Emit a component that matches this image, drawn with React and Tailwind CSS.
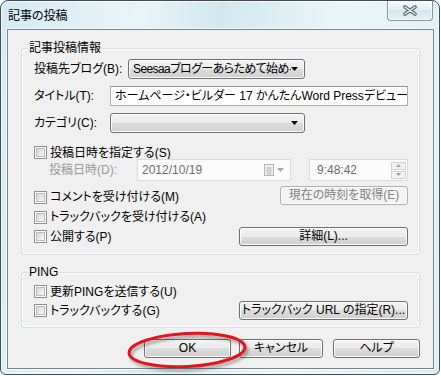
import React from 'react';

const font = "font-['Liberation_Sans','Noto_Sans_CJK_JP',sans-serif] [font-feature-settings:'palt']";

const Box = () => (
  <span className="flex w-[13px] h-[13px] shrink-0 border border-[#8e8f8f] bg-white p-[1px]">
    <span className="flex-1 border border-[#b9bdc2] bg-[linear-gradient(135deg,#d4d7db,#f8f8f8)]" />
  </span>
);

const Check = ({ children }) => (
  <label className="flex items-center">
    <Box />
    <span className="ml-[3px] leading-[16px] whitespace-nowrap">{children}</span>
  </label>
);

const Btn = ({ className = '', disabled, children }) => (
  <button
    type="button"
    className={
      'h-[19px] shrink-0 rounded-[3px] border leading-[15px] whitespace-nowrap shadow-[inset_0_0_0_1px_#fcfcfc] ' +
      (disabled
        ? 'border-[#adb2b5] bg-[#f4f4f4] text-[#838383] '
        : 'border-[#707070] bg-[linear-gradient(#f2f2f2,#ebebeb_50%,#dddddd_50%,#cfcfcf)] text-black ') +
      className
    }
  >
    {children}
  </button>
);

const Arrow = ({ color = '#000' }) => (
  <svg width="7" height="4" viewBox="0 0 7 4" className="shrink-0">
    <path d="M0 0H7L3.5 4Z" fill={color} />
  </svg>
);

const Select = ({ className = '', children }) => (
  <div
    className={
      'flex h-[20px] items-center rounded-[3px] border border-[#707070] bg-[linear-gradient(#f2f2f2,#ebebeb_50%,#dddddd_50%,#cfcfcf)] pl-[4px] pr-[6px] shadow-[inset_0_0_0_1px_#fcfcfc] ' +
      className
    }
  >
    <span className="flex-1 overflow-hidden whitespace-nowrap leading-[16px] tracking-[-0.6px]">{children}</span>
    <Arrow />
  </div>
);

export default function App() {
  return (
    <div className={'relative w-[441px] h-[376px] bg-white text-[12px] text-black ' + font}>
      <div className="w-[440px] h-[375px] rounded-t-[8px] rounded-b-[6px] border border-[#3f4c57] bg-[linear-gradient(100deg,#d4eaf1_0%,#e7f5f9_28%,#d2e8ef_44%,#e9f6f9_68%,#dbeef4_100%)] shadow-[inset_0_0_0_1px_rgba(255,255,255,0.7)]">
        <div className="flex h-[28px] items-start justify-between">
          <span className="ml-[7px] mt-[7px] leading-[16px] text-[12px]">記事の投稿</span>
          <div className="mr-[6px] flex h-[20px] w-[46px] items-center justify-center rounded-b-[4px] border border-t-0 border-[#8894a0] bg-[linear-gradient(#f4fafc,#dfeef3_50%,#d4e7ee_50%,#e3f1f5)] shadow-[inset_0_0_0_1px_rgba(255,255,255,0.6)]">
            <svg width="16" height="11" viewBox="0 0 16 11">
              <path d="M3 2L13 9M13 2L3 9" stroke="#5b6570" strokeWidth="3.6" strokeLinecap="round" />
              <path d="M3 2L13 9M13 2L3 9" stroke="#eef2f5" strokeWidth="1.4" strokeLinecap="round" />
            </svg>
          </div>
        </div>

        <div className="ml-[6px] w-[427px] h-[340px] border border-[#7b8591] bg-[#f0f0f0] shadow-[0_0_0_1px_rgba(255,255,255,0.6)]">
          {/* 記事投稿情報 */}
          <div className="relative ml-[13px] mt-[18px] w-[399px] h-[207px] rounded-[3px] border border-[#d5dfe5] pl-[12px] pr-[10px] shadow-[inset_0_0_0_1px_#fff]">
            <span className="absolute left-[6px] -top-[9px] bg-[#f0f0f0] px-[1px] leading-[16px]">記事投稿情報</span>

            <div className="mt-[10px] flex h-[20px] items-center">
              <span className="w-[94px] leading-[16px]">投稿先ブログ(B):</span>
              <Select className="w-[177px]">Seesaaブログーあらためて始め·</Select>
            </div>

            <div className="mt-[7px] flex h-[20px] items-center">
              <span className="w-[76px] leading-[16px]">タイトル(T):</span>
              <div className="flex h-[20px] w-[298px] items-center overflow-hidden border border-[#abadb3] border-t-[#8e9196] bg-white pl-[4px]">
                <span className="whitespace-nowrap leading-[16px]">ホームページ・ビルダー 17 かんたんWord Pressデビュー</span>
              </div>
            </div>

            <div className="mt-[7px] flex h-[20px] items-center">
              <span className="w-[76px] leading-[16px]">カテゴリ(C):</span>
              <Select className="w-[195px]"></Select>
            </div>

            <div className="mt-[13px] flex h-[13px] items-center">
              <Check>投稿日時を指定する(S)</Check>
            </div>

            <div className="flex h-[22px] items-center pl-[15px]">
              <span className="w-[88px] leading-[16px] text-[#9a9a9a]">投稿日時(D):</span>
              <div className="flex h-[22px] w-[154px] items-center border border-[#d9dce0] bg-[#fcfcfc] pl-[4px] pr-[6px]">
                <span className="flex-1 leading-[16px] text-[#6d6d6d]">2012/10/19</span>
                <svg width="10" height="12" viewBox="0 0 10 12" className="mr-[3px]">
                  <rect x="0.5" y="0.5" width="9" height="11" fill="#f2f2f2" stroke="#b5b5b5" />
                  <path d="M2 4H8M2 6.5H8M2 9H8M4 3V11M6 3V11" stroke="#c4c4c4" strokeWidth="1" />
                </svg>
                <Arrow color="#a8a8a8" />
              </div>
              <div className="ml-[18px] flex h-[22px] w-[99px] items-center border border-[#d9dce0] bg-[#fcfcfc] pl-[7px] pr-[1px]">
                <span className="flex-1 leading-[16px] text-[#6d6d6d]">9:48:42</span>
                <div className="flex flex-col gap-[1px]">
                  <span className="flex h-[8px] w-[15px] items-center justify-center border border-[#d0d3d6] bg-[#f2f2f2]">
                    <svg width="5" height="3" viewBox="0 0 5 3"><path d="M0 3H5L2.5 0Z" fill="#a0a0a0" /></svg>
                  </span>
                  <span className="flex h-[8px] w-[15px] items-center justify-center border border-[#d0d3d6] bg-[#f2f2f2]">
                    <svg width="5" height="3" viewBox="0 0 5 3"><path d="M0 0H5L2.5 3Z" fill="#a0a0a0" /></svg>
                  </span>
                </div>
              </div>
            </div>

            <div className="flex h-[24px] items-end justify-between pr-[1px]">
              <Check>コメントを受け付ける(M)</Check>
              <Btn disabled className="w-[128px]">現在の時刻を取得(E)</Btn>
            </div>

            <div className="mt-[5px] flex h-[14px] items-center">
              <Check>トラックバックを受け付ける(A)</Check>
            </div>

            <div className="mt-[3px] flex h-[19px] items-center justify-between pr-[1px]">
              <Check>公開する(P)</Check>
              <Btn className="w-[169px]">詳細(L)...</Btn>
            </div>
          </div>

          {/* PING */}
          <div className="relative ml-[13px] mt-[17px] w-[399px] h-[56px] rounded-[3px] border border-[#d5dfe5] pl-[12px] pr-[11px] shadow-[inset_0_0_0_1px_#fff]">
            <span className="absolute left-[6px] -top-[9px] bg-[#f0f0f0] px-[1px] leading-[16px]">PING</span>
            <div className="mt-[12px] flex h-[13px] items-center">
              <Check>更新PINGを送信する(U)</Check>
            </div>
            <div className="mt-[3px] flex h-[19px] items-center justify-between">
              <Check>トラックバックする(G)</Check>
              <Btn className="w-[169px]">トラックバック URL の指定(R)...</Btn>
            </div>
          </div>

          <div className="ml-[136px] mt-[11px] flex">
            <Btn className="w-[87px]">OK</Btn>
            <Btn className="ml-[8px] w-[84px]">キャンセル</Btn>
            <Btn className="ml-[10px] w-[87px]">ヘルプ</Btn>
          </div>
        </div>
      </div>

      <svg className="pointer-events-none absolute left-0 top-0" width="441" height="376" viewBox="0 0 441 376">
        <defs>
          <filter id="sh" x="-20%" y="-40%" width="140%" height="180%">
            <feGaussianBlur stdDeviation="1.5" />
          </filter>
        </defs>
        <ellipse cx="189" cy="353" rx="58" ry="16.5" transform="rotate(-3 189 353)" fill="none" stroke="rgba(0,0,0,0.35)" strokeWidth="3" filter="url(#sh)" />
        <ellipse cx="187" cy="350" rx="58" ry="16.5" transform="rotate(-3 187 350)" fill="none" stroke="#e3141b" strokeWidth="3" />
      </svg>
    </div>
  );
}
